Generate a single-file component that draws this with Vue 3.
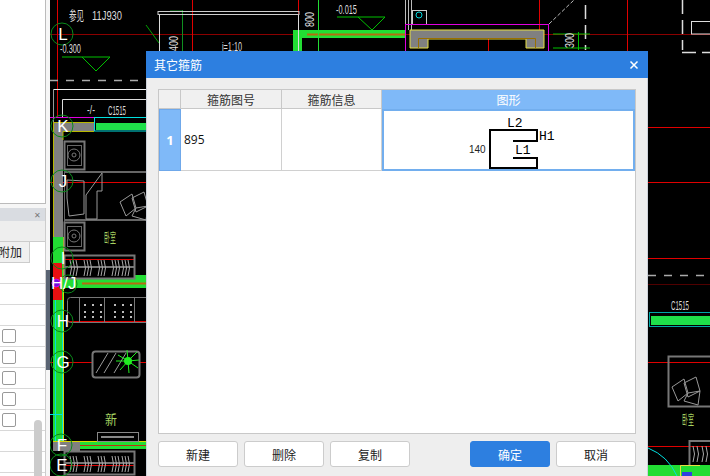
<template>
  <div class="page">
    <!-- CAD drawing behind the dialog -->
    <svg class="cad" width="710" height="476" viewBox="0 0 710 476" fill="none">
      <g stroke="#8b0000">
        <path d="M50 34.5H710" />
        <path d="M648 284.5H710" stroke="#500000" />
      </g>
      <g stroke="#e00000">
        <path d="M57.5 0V118M192.5 0V51M298.5 0V14M488.5 38V51M539.5 0V30M627.5 0V51" />
        <path d="M50 182.5H146M50 362.5H92M140 362.5H146M648 127.5H710M648 182.5H710M648 258.5H710M648 362.5H710M648 446.5H710M648 465.5H690M64 259.5H134M64 465.5H134M67 321.5H146" />
      </g>
      <path d="M50 80.5H146M648 275.5H710" stroke="#aaa" stroke-width="1.5" stroke-dasharray="8 8" />
      <path d="M585.5 5V50M682.5 0V50M682 52.5H710" stroke="#ddd" stroke-width="1.5" stroke-dasharray="14 6" />
      <path d="M549 24L574 0" stroke="#bbb" stroke-dasharray="4 2" />

      <!-- walls -->
      <rect x="53" y="122" width="41" height="10" fill="#808080" />
      <rect x="53" y="122" width="10" height="115" fill="#808080" />
      <path d="M53.5 237V122.5H94M63 140V131.5H94" stroke="#b8b800" />
      <path d="M53.5 89.5H146" stroke="#eee" />
      <path d="M53.5 89V122" stroke="#999" />
      <path d="M62.5 117V99.5H146" stroke="#ddd" />
      <path d="M50 117.5H146" stroke="#e000e0" />
      <rect x="94.5" y="117.5" width="60" height="13.5" stroke="#00e0e0" fill="#000" />
      <rect x="96" y="123" width="52" height="7" fill="#1fe04a" />

      <rect x="53" y="237" width="10" height="204" fill="#22dd33" />
      <path d="M55.5 300V441M62.5 300V441M50 414.5H62" stroke="#00e0e0" />
      <path d="M63.5 237V441" stroke="#d8d800" />
      <rect x="53" y="263" width="9" height="37" fill="#e81010" />
      <rect x="63" y="278" width="72" height="10" fill="#22dd33" />
      <rect x="135" y="275" width="11" height="13" fill="#22dd33" />
      <path d="M82 283.5H146" stroke="#b86a10" stroke-width="2" />
      <rect x="53" y="441" width="27" height="10" fill="#808080" />
      <rect x="80" y="441" width="66" height="8" fill="#22dd33" />
      <path d="M53 441.5H146" stroke="#d8d800" />
      <path d="M80 445.5H146" stroke="#c03010" />

      <path d="M293 30H405V38H302V51H293Z" fill="#22dd33" />
      <path d="M307 34.5H405" stroke="#b86a10" stroke-width="2" />
      <path d="M318.5 0V51" stroke="#22dd33" />
      <path d="M182.5 10V51M170 11H183" stroke="#0f9020" />
      <path d="M146 25L159 43" stroke="#00a000" />

      <rect x="158" y="11.5" width="141" height="3" stroke="#ccc" />
      <path d="M159.5 15V51M298.5 15V51" stroke="#ddd" />
      <path d="M405.5 0V30M408.5 0V30M411.5 0V30" stroke="#bbb" />
      <rect x="412.5" y="10.5" width="14" height="14" stroke="#ccc" />
      <circle cx="419" cy="15" r="3" stroke="#00d8e0" />
      <rect x="405.5" y="24.5" width="143" height="30" stroke="#e000e0" />
      <path d="M410 30H544V48H526V39H428V48H410Z" fill="#808080" stroke="#e8e040" />
      <path d="M418.5 48V38.5H428M535.5 48V38.5H526M428 38.5H526" stroke="#9a7000" />

      <!-- green level marks -->
      <path d="M337 17H385M358 17L372 30L385 17M62 57H110M82 57L96 71L110 57M553 34H590M553 48H590" stroke="#00c000" />
      <path d="M578.5 32V50" stroke="#00c000" />

      <!-- right hand side -->
      <rect x="649.5" y="312.5" width="62" height="14" stroke="#00a8a8" />
      <rect x="651" y="316" width="60" height="9" fill="#1fe04a" />
      <rect x="668.5" y="356.5" width="50" height="50" stroke="#777" stroke-width="2" />
      <rect x="691.5" y="21.5" width="30" height="12.5" stroke="#ddd" />
      <rect x="689.5" y="441" width="30" height="40" stroke="#777" stroke-width="2" />
      <path v-for="x in [693, 702]" :key="x" :d="`M${x} 446q3 8 0 16m4 -16q3 8 0 16`" stroke="#aaa" />
      <rect x="648" y="465" width="62" height="11" fill="#22dd33" />
      <path d="M680.5 476V465.5H700" stroke="#e8e040" />
      <rect x="682" y="472" width="10" height="4" fill="#3040e0" />
      <path d="M648 448Q668 456 677 476" stroke="#00e0e0" />

      <!-- furniture -->
      <g v-for="sq in squares" :key="sq.y" stroke="#777">
        <rect x="64.5" :y="sq.y + 0.5" width="20" height="28" stroke-width="2" />
        <rect x="67.5" :y="sq.y + 4.5" width="14" height="20" stroke="#666" />
        <circle cx="74" :cy="sq.y + 14" r="6" />
        <circle cx="74" :cy="sq.y + 14" r="2" />
      </g>
      <path d="M64 171H146V173H64ZM64 219H146V221H64ZM64 170H65V222H64Z" fill="#666" />
      <path d="M67 180L84 181V214L69 216L67 198ZM86 195L102 173V191H97V219H86Z" stroke="#999" />
      <g v-for="pile in paperPiles" :key="pile" :transform="pile" stroke="#999">
        <path d="M0 10L12 2L16 16L6 24ZM12 6L24 0L28 14L16 20ZM16 16L28 14L26 28L12 24Z" />
      </g>

      <g v-for="coil in coils" :key="coil.y">
        <rect x="64.5" :y="coil.y + 0.5" width="70" height="23" stroke="#777" stroke-width="2" />
        <path :d="`M65 ${coil.y + 12}H134`" stroke="#777" stroke-width="2" />
        <path
          v-for="x in coilXs"
          :key="x"
          :d="`M${x} ${coil.y + 5}q3 8 0 16m3 -16q3 8 0 16m3 -16q3 8 0 16`"
          stroke="#aaa"
        />
      </g>
      <rect x="67.5" y="297.5" width="90" height="25" rx="3" stroke="#777" />
      <path d="M79.5 298V322M104.5 298V322M134.5 298V322" stroke="#777" />
      <g fill="#bbb">
        <rect v-for="d in dots" :key="d.k" :x="d.x" :y="d.y" width="2" height="2" />
      </g>
      <rect x="92.5" y="351.5" width="47" height="26" rx="3" stroke="#777" stroke-width="2" />
      <path d="M96 373L108 353M104 373L116 353M114 373L126 353" stroke="#999" />
      <path d="M128 361L118 355M128 361L120 370M128 361L137 352M128 361L138 368M128 361L127 350M128 361L129 373M128 361L116 361M128 361L139 360" stroke="#20ee20" />
      <circle cx="128" cy="361" r="4" fill="#20ee20" />
      <rect x="97.5" y="432.5" width="41" height="9" stroke="#888" />
      <path d="M101 437H134" stroke="#888" stroke-width="2" />

      <!-- axis bubbles -->
      <g v-for="axis in axes" :key="axis.y">
        <circle :cx="axis.x" :cy="axis.y" r="11" stroke="#0a8a1a" />
        <text :x="axis.x + 1" :y="axis.y + 6" class="axis-text" text-anchor="middle">{{ axis.label }}</text>
      </g>
      <circle cx="68" cy="284" r="9" stroke="#0a8a1a" />
      <circle cx="56" cy="283" r="4" fill="#7010e0" stroke="#e000e0" />
      <text x="51" y="289" class="axis-text">H/J</text>

      <!-- drawing notes -->
      <text x="69" y="20" class="note" textLength="15" lengthAdjust="spacingAndGlyphs">参见</text>
      <text x="92" y="20" class="note" textLength="30" lengthAdjust="spacingAndGlyphs">11J930</text>
      <text x="60" y="53" class="note" textLength="21" lengthAdjust="spacingAndGlyphs">-0.300</text>
      <text x="87" y="114" class="note" textLength="8" lengthAdjust="spacingAndGlyphs">-/-</text>
      <text x="108" y="115" class="note" textLength="18" lengthAdjust="spacingAndGlyphs">C1515</text>
      <text x="336" y="14" class="note" textLength="21" lengthAdjust="spacingAndGlyphs">-0.015</text>
      <text x="222" y="51" class="note" textLength="20" lengthAdjust="spacingAndGlyphs">i=1:10</text>
      <text x="671" y="310" class="note" textLength="18" lengthAdjust="spacingAndGlyphs">C1515</text>
      <text transform="translate(178 51) rotate(-90)" class="note" textLength="15" lengthAdjust="spacingAndGlyphs">400</text>
      <text transform="translate(314 27) rotate(-90)" class="note" textLength="15" lengthAdjust="spacingAndGlyphs">800</text>
      <text transform="translate(574 48) rotate(-90)" class="note" textLength="15" lengthAdjust="spacingAndGlyphs">300</text>
      <text x="104" y="242" class="room" textLength="12" lengthAdjust="spacingAndGlyphs">卧室</text>
      <text x="682" y="424" class="room" textLength="12" lengthAdjust="spacingAndGlyphs">卧室</text>
      <text x="105" y="424" class="room" textLength="12" lengthAdjust="spacingAndGlyphs">新</text>
    </svg>

    <!-- docked panels on the left -->
    <div class="side-strip"></div>
    <div class="side-top"></div>
    <div class="side-panel">
      <div class="side-title"><span class="side-close">✕</span></div>
      <div class="side-filler"></div>
      <div class="side-head"><span>附加</span></div>
      <div class="side-rows">
        <div v-for="(row, i) in sideRows" :key="i" class="side-row">
          <span v-if="row" class="check"></span>
        </div>
      </div>
      <div class="side-scroll"></div>
    </div>
    <div class="side-grip"></div>

    <!-- dialog -->
    <div class="dialog">
      <div class="dialog-title">
        <span>其它箍筋</span>
        <svg width="10" height="10" viewBox="0 0 10 10" class="close-icon">
          <path d="M1.5 1.5L8.5 8.5M8.5 1.5L1.5 8.5" stroke="#fff" stroke-width="1.5" />
        </svg>
      </div>
      <div class="dialog-body">
        <div class="grid">
          <div class="grid-row head-row">
            <div class="cell corner"></div>
            <div class="cell col-a">箍筋图号</div>
            <div class="cell col-b">箍筋信息</div>
            <div class="cell col-c active-head">图形</div>
          </div>
          <div class="grid-row data-row">
            <div class="cell row-no">1</div>
            <div class="cell col-a value">895</div>
            <div class="cell col-b"></div>
            <div class="cell col-c shape-cell">
              <svg width="249" height="58" viewBox="0 0 249 58" fill="none">
                <path d="M129 30H153V19H106V57H153V47H129" stroke="#000" stroke-width="2" />
                <text x="123" y="16" class="shape-text">L2</text>
                <text x="155" y="29" class="shape-text">H1</text>
                <text x="131" y="43" class="shape-text">L1</text>
                <text x="85" y="42" class="len-text">140</text>
              </svg>
            </div>
          </div>
        </div>
        <div class="actions">
          <button v-for="name in leftButtons" :key="name" class="btn">{{ name }}</button>
          <span class="spacer"></span>
          <button class="btn primary">确定</button>
          <button class="btn">取消</button>
        </div>
      </div>
    </div>
  </div>
</template>

<script setup>
const leftButtons = ['新建', '删除', '复制']

const axes = [
  { label: 'L', x: 62, y: 34 },
  { label: 'K', x: 62, y: 126 },
  { label: 'J', x: 62, y: 181 },
  { label: 'I', x: 62, y: 258 },
  { label: 'H', x: 62, y: 321 },
  { label: 'G', x: 62, y: 362 },
  { label: 'F', x: 61, y: 445 },
  { label: 'E', x: 61, y: 465 }
]

const squares = [{ y: 141 }, { y: 222 }]
const paperPiles = ['translate(120 192)', 'translate(672 377)']
const coils = [{ y: 255 }, { y: 451 }]
const coilXs = [70, 84, 98, 112, 122]

const dots = []
for (const x of [84, 92, 100, 114, 122, 130]) {
  for (const y of [304, 311, 316]) {
    dots.push({ k: `${x}-${y}`, x, y })
  }
}

const sideRows = [false, false, false, true, true, true, true, true, false, false]
</script>

<style scoped>
.page {
  position: relative;
  width: 710px;
  height: 476px;
  overflow: hidden;
  background: #000;
  font-family: "Noto Sans CJK SC", "Noto Sans", sans-serif;
  font-size: 12px;
}

.cad {
  position: absolute;
  left: 0;
  top: 0;
}

.axis-text {
  fill: #fff;
  font-family: "Liberation Sans", sans-serif;
  font-size: 17px;
}

.note {
  fill: #ddd;
  font-family: "Liberation Sans", "Noto Sans CJK SC", sans-serif;
  font-size: 13px;
}

.room {
  fill: #a4d060;
  font-family: "Noto Sans CJK SC", sans-serif;
  font-size: 13px;
}

.side-strip {
  position: absolute;
  left: 0;
  top: 0;
  width: 50px;
  height: 476px;
  background: #f6f6f6;
}

.side-top {
  position: absolute;
  left: 0;
  top: 0;
  width: 46px;
  height: 204px;
  box-sizing: border-box;
  background: #fff;
  border-right: 1px solid #bbb;
  border-bottom: 1px solid #bbb;
}

.side-panel {
  position: absolute;
  left: 0;
  top: 208px;
  width: 46px;
  height: 268px;
  background: #fff;
  border-right: 1px solid #ccc;
  box-sizing: border-box;
}

.side-title {
  display: flex;
  justify-content: flex-end;
  align-items: center;
  height: 13px;
  padding-right: 4px;
  background: #d9dce1;
}

.side-close {
  color: #777;
  font-size: 8px;
}

.side-filler {
  height: 21px;
  background: #eee;
  border-bottom: 1px solid #ccc;
  box-sizing: border-box;
}

.side-head {
  width: 30px;
  height: 21px;
  box-sizing: border-box;
  overflow: hidden;
  line-height: 20px;
  background: #f0f0f0;
  border-right: 1px solid #ccc;
  border-bottom: 1px solid #ccc;
  color: #222;
}

.side-head span {
  display: block;
  margin-left: -2px;
  white-space: nowrap;
}

.side-rows {
  margin-top: 0;
}

.side-row {
  display: flex;
  align-items: center;
  height: 21px;
  padding-left: 2px;
  border-bottom: 1px solid #d8d8d8;
  box-sizing: border-box;
}

.check {
  width: 12px;
  height: 12px;
  border: 1px solid #999;
  border-radius: 2px;
  background: #fff;
}

.side-scroll {
  position: absolute;
  right: 3px;
  top: 212px;
  width: 8px;
  height: 60px;
  border-radius: 4px;
  background: #ccc;
}

.side-grip {
  position: absolute;
  left: 46px;
  top: 270px;
  width: 4px;
  height: 100px;
  background: #5a6473;
}

.dialog {
  position: absolute;
  left: 146px;
  top: 51px;
  width: 502px;
  height: 425px;
  display: flex;
  flex-direction: column;
  background: #eee;
}

.dialog-title {
  display: flex;
  justify-content: space-between;
  align-items: center;
  height: 27px;
  padding: 0 9px 0 8px;
  background: #2d7fe0;
  color: #fff;
  font-size: 12px;
  flex: none;
}

.close-icon {
  display: block;
}

.dialog-body {
  flex: 1;
  display: flex;
  flex-direction: column;
  padding: 11px 12px 9px;
  min-height: 0;
  box-shadow: inset 1px 0 0 #cdd2da, inset -1px 0 0 #cdd2da;
}

.grid {
  flex: 1;
  background: #fff;
  border: 1px solid #c8c8c8;
  min-height: 0;
}

.grid-row {
  display: flex;
}

.head-row {
  height: 19px;
  background: #f0f0f0;
  color: #333;
}

.data-row {
  height: 62px;
}

.cell {
  box-sizing: border-box;
  display: flex;
  align-items: center;
  justify-content: center;
  border-right: 1px solid #d0d0d0;
  border-bottom: 1px solid #d0d0d0;
}

.head-row .cell {
  border-color: #c8c8c8;
}

.corner,
.row-no {
  width: 22px;
}

.col-a {
  width: 101px;
}

.col-b {
  width: 100px;
}

.col-c {
  width: 253px;
  border-right: none;
}

.head-row .active-head {
  background: #7fb9f8;
  border-color: #7fb9f8;
  color: #fff;
}

.row-no {
  background: #7fb9f8;
  color: #fff;
  font-family: "Open Sans", sans-serif;
  font-weight: 700;
  font-size: 13px;
  border: 1px solid #6fa8ea;
}

.value {
  justify-content: flex-start;
  padding-left: 3px;
  color: #111;
  font-family: "Open Sans", sans-serif;
  font-size: 12px;
}

.shape-cell {
  border: 2px solid #72aeee;
}

.shape-cell svg {
  display: block;
}

.shape-text {
  fill: #000;
  font-family: "Liberation Mono", monospace;
  font-size: 13px;
}

.len-text {
  fill: #222;
  font-family: "Liberation Sans", sans-serif;
  font-size: 10px;
}

.actions {
  display: flex;
  gap: 6px;
  margin-top: 7px;
  flex: none;
}

.spacer {
  flex: 1;
}

.btn {
  width: 80px;
  height: 26px;
  padding: 0;
  background: #fff;
  border: 1px solid #ccc;
  border-radius: 3px;
  color: #222;
  font-family: inherit;
  font-size: 12px;
}

.primary {
  background: #2d7fe0;
  border-color: #2d7fe0;
  color: #fff;
}
</style>
